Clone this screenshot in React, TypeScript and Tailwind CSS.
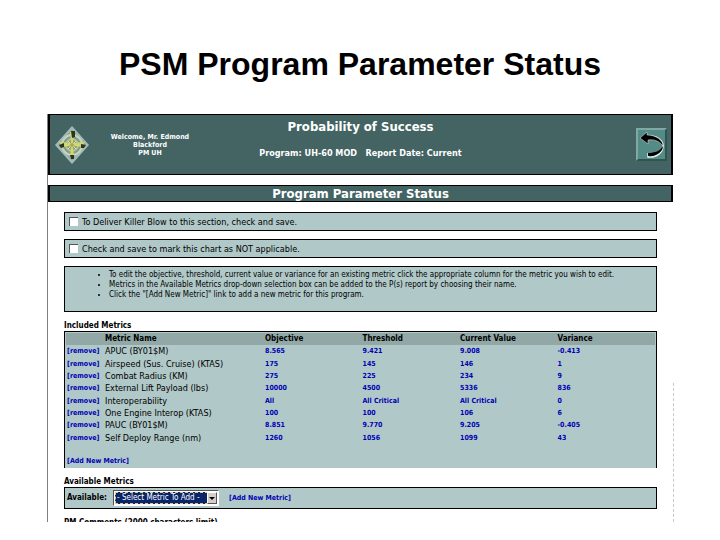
import React from "react";

interface Metric {
  name: string;
  objective: string;
  threshold: string;
  current: string;
  variance: string;
}

const metrics: Metric[] = [
  { name: "APUC (BY01$M)", objective: "8.565", threshold: "9.421", current: "9.008", variance: "-0.413" },
  { name: "Airspeed (Sus. Cruise) (KTAS)", objective: "175", threshold: "145", current: "146", variance: "1" },
  { name: "Combat Radius (KM)", objective: "275", threshold: "225", current: "234", variance: "9" },
  { name: "External Lift Payload (lbs)", objective: "10000", threshold: "4500", current: "5336", variance: "836" },
  { name: "Interoperability", objective: "All", threshold: "All Critical", current: "All Critical", variance: "0" },
  { name: "One Engine Interop (KTAS)", objective: "100", threshold: "100", current: "106", variance: "6" },
  { name: "PAUC (BY01$M)", objective: "8.851", threshold: "9.770", current: "9.205", variance: "-0.405" },
  { name: "Self Deploy Range (nm)", objective: "1260", threshold: "1056", current: "1099", variance: "43" },
];

const notes = [
  "To edit the objective, threshold, current value or variance for an existing metric click the appropriate column for the metric you wish to edit.",
  "Metrics in the Available Metrics drop-down selection box can be added to the P(s) report by choosing their name.",
  'Click the "[Add New Metric]" link to add a new metric for this program.',
];

const Logo: React.FC = () => (
  <svg viewBox="0 0 36 40" className="h-10 w-9" aria-hidden="true">
    <path d="M18 1 35 20 18 39 1 20Z" fill="#a3bdb6" />
    <path d="M18 4 32 20 18 36 4 20Z" fill="#8ba9a2" />
    <circle cx="18" cy="20" r="10" fill="#7d9a8e" stroke="#c6d3bd" strokeWidth="2" />
    <circle cx="18" cy="20" r="6" fill="none" stroke="#b4c090" strokeWidth="2" />
    <path d="M16 7h4l-1 11 11-1v5l-11-1 1 12h-4l1-12-11 1v-5l11 1Z" fill="#d3d66f" />
    <path d="M17 6h4v6l-3 1ZM16 30h4v4h-3ZM5 20l5-2v4l-3 1ZM27 19l5 1-2 3h-3Z" fill="#2c3420" />
    <path d="M14 16l8 8M22 16l-8 8" stroke="#e6e79a" strokeWidth="1" />
    <circle cx="18" cy="20" r="2" fill="#a9ac4c" />
  </svg>
);

const BackArrow: React.FC = () => (
  <svg viewBox="0 0 27 29" className="h-full w-full" aria-hidden="true">
    <path d="M11 6C19 6 25 10 25 16 25 22 19 28 10 27V23" fill="none" stroke="#e8f2ef" strokeWidth="1.5" />
    <path d="M2 8 9 2V5C18 5 25 10 25 16 21 11 16 9 10 10V14Z" fill="#000" stroke="#e8f2ef" strokeWidth="0.5" />
    <path d="M25 16C25 22 18 27 10 26V23C17 23 22 21 25 16Z" fill="#000" />
  </svg>
);

const CheckRow: React.FC<{ id: string; label: string }> = ({ id, label }) => (
  <div className="mb-2 flex h-[19px] items-center border border-black bg-[#b0c8c7] pl-1">
    <input
      id={id}
      type="checkbox"
      className="h-[9px] w-[9px] appearance-none border-t border-l border-[#555] bg-white"
    />
    <label htmlFor={id} className="pl-1 text-[9px] leading-[12px]">
      {label}
    </label>
  </div>
);

const App: React.FC = () => {
  return (
    <main className="min-h-screen bg-white px-[47px] text-black">
      <h1 className="pt-[46px] pb-[32px] text-center font-['Liberation_Sans',sans-serif] text-[32px] leading-[36px] font-bold">
        PSM Program Parameter Status
      </h1>

      <div className="relative border-l border-[#808080] font-['DejaVu_Sans_Condensed','DejaVu_Sans',sans-serif]">
        <header className="flex h-[61px] items-center border border-l-2 border-r-2 border-black bg-[#446463] pr-1 pl-1 text-white">
          <div className="flex flex-1 items-center gap-[18px]">
            <Logo />
            <p className="w-[84px] text-center text-[7px] leading-[8px] font-bold">
              Welcome, Mr. Edmond
              <br />
              Blackford
              <br />
              PM UH
            </p>
          </div>
          <div className="pb-3 text-center font-bold">
            <h2 className="text-[13px] leading-[16px]">Probability of Success</h2>
            <p className="pt-[12px] text-[9px] leading-[12px] whitespace-pre">
              {"Program: UH-60 MOD   Report Date: Current"}
            </p>
          </div>
          <div className="flex flex-1 justify-end">
            <button
              type="button"
              aria-label="Back"
              className="h-[33px] w-[31px] border-2 border-t-[#7fa9a5] border-r-[#2f5553] border-b-[#2f5553] border-l-[#7fa9a5] bg-[#558b87]"
            >
              <BackArrow />
            </button>
          </div>
        </header>

        <h2 className="mt-[10px] h-[17px] border border-l-2 border-r-2 border-black bg-[#446463] text-center text-[13px] leading-[16px] font-bold text-white">
          Program Parameter Status
        </h2>

        <div className="mx-4 pt-[10px]">
          <CheckRow id="killer-blow" label="To Deliver Killer Blow to this section, check and save." />
          <CheckRow id="not-applicable" label="Check and save to mark this chart as NOT applicable." />

          <ul className="h-[46px] list-disc border border-black bg-[#b0c8c7] pt-[3px] pl-[44px] text-[8px] leading-[9px]">
            {notes.map((note) => (
              <li key={note} className="pb-px">
                {note}
              </li>
            ))}
          </ul>

          <h3 className="pt-[9px] text-[8px] leading-[10px] font-bold">Included Metrics</h3>
          <section className="h-[137px] border border-b-0 border-black bg-[#b0c8c7] p-px">
            <table className="h-[111px] w-full table-fixed text-left">
              <thead>
                <tr className="bg-[#91a8a6] text-[8px] leading-[12px]">
                  <th className="w-[39px]"></th>
                  <th className="w-[160px]">Metric Name</th>
                  <th>Objective</th>
                  <th>Threshold</th>
                  <th>Current Value</th>
                  <th>Variance</th>
                </tr>
              </thead>
              <tbody>
                {metrics.map((metric) => (
                  <tr key={metric.name} className="text-[7px] leading-[12px] font-bold text-[#0000b4]">
                    <td className="pl-px">
                      <a href="#remove">[remove]</a>
                    </td>
                    <td className="text-[9px] font-normal text-black">{metric.name}</td>
                    <td>{metric.objective}</td>
                    <td>{metric.threshold}</td>
                    <td>{metric.current}</td>
                    <td>{metric.variance}</td>
                  </tr>
                ))}
              </tbody>
            </table>
            <a href="#add" className="mt-[11px] ml-px block text-[7px] leading-[12px] font-bold text-[#0000b4]">
              [Add New Metric]
            </a>
          </section>

          <h3 className="pt-[9px] text-[8px] leading-[10px] font-bold">Available Metrics</h3>
          <section className="flex h-[22px] items-center border border-black bg-[#b0c8c7] pl-[2px]">
            <label htmlFor="available" className="w-[46px] text-[8px] font-bold">
              Available:
            </label>
            <div className="relative h-4 w-[106px] border border-t-[#555] border-r-white border-b-white border-l-[#555] bg-white p-px">
              <select
                id="available"
                className="block h-full w-[93px] appearance-none border border-dashed border-[#d8c890] bg-[#0a246a] pl-px text-[8px] leading-[10px] text-white"
              >
                <option>- Select Metric To Add -</option>
              </select>
              <span className="pointer-events-none absolute top-px right-px flex h-3 w-[10px] items-center justify-center border border-t-white border-r-[#555] border-b-[#555] border-l-white bg-[#d4d0c8]">
                <svg viewBox="0 0 6 3" className="h-[3px] w-[6px]" aria-hidden="true">
                  <path d="M0 0h6L3 3Z" fill="#000" />
                </svg>
              </span>
            </div>
            <a href="#add" className="ml-[10px] text-[7px] font-bold text-[#0000b4]">
              [Add New Metric]
            </a>
          </section>

          <h3 className="mt-[9px] h-[4px] overflow-hidden text-[8px] leading-[10px] font-bold">
            PM Comments (2000 characters limit)
          </h3>
        </div>

        <span className="absolute right-[-1px] bottom-0 h-[139px] border-r border-dashed border-[#c8c8c8]" />
      </div>
    </main>
  );
};

export default App;
